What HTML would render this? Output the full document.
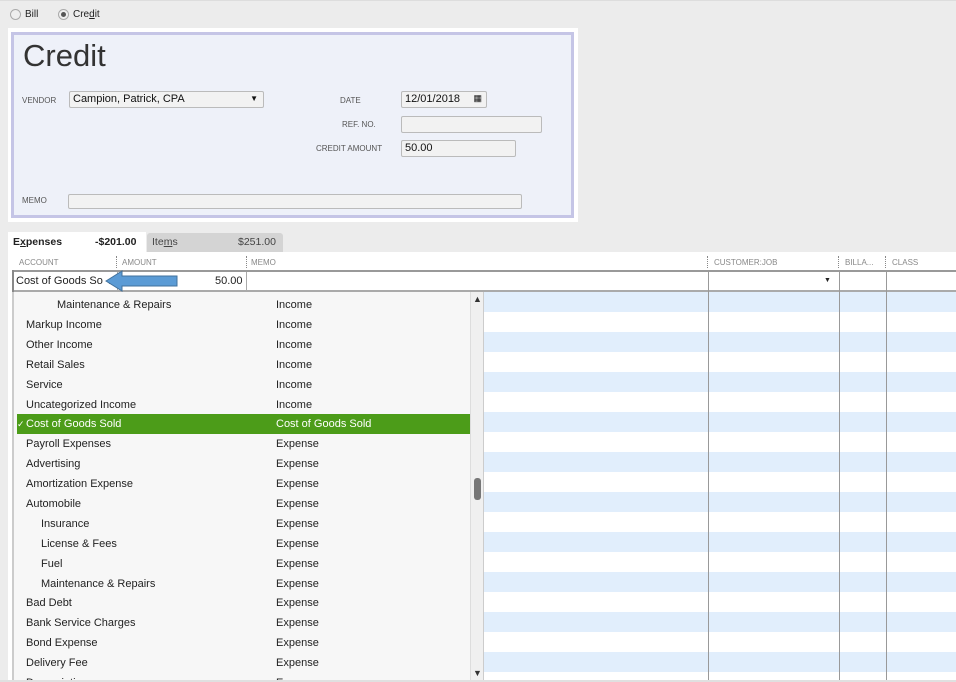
<!DOCTYPE html>
<html style="width:956px;height:682px;overflow:hidden"><head><style>
*{margin:0;padding:0;box-sizing:border-box}
body{width:956px;height:682px;background:#ececec;font-family:"Liberation Sans",Arial,sans-serif;position:relative;overflow:hidden;color:#222}
.a{position:absolute}
.lbl{font-size:8px;color:#555}
.fld{position:absolute;background:#f2f2f2;border:1px solid #bbb;border-radius:2px;font-size:12px;padding:2px 3px;color:#111}
.row{position:absolute;left:0;width:453px;height:20px;font-size:11px;line-height:21px;color:#222}
.row span{position:absolute}
</style></head><body>
<div class="a" style="left:0;top:0;width:956px;height:1px;background:#ddd"></div>
<div class="a" style="left:10px;top:9px;width:11px;height:11px;border-radius:50%;border:1px solid #aaa;background:#eee"></div>
<div class="a" style="left:25px;top:9px;font-size:10px">Bill</div>
<div class="a" style="left:58px;top:9px;width:11px;height:11px;border-radius:50%;border:1px solid #aaa;background:#eee"></div>
<div class="a" style="left:61px;top:12px;width:5px;height:5px;border-radius:50%;background:#555"></div>
<div class="a" style="left:73px;top:9px;font-size:10px">Cre<u>d</u>it</div>

<div class="a" style="left:8px;top:28px;width:570px;height:194px;background:#fff"></div>
<div class="a" style="left:11px;top:32px;width:563px;height:186px;background:#eef1f9;border:3px solid #c5c5e6"></div>
<div class="a" style="left:23px;top:38px;font-size:31px;color:#333">Credit</div>
<div class="a lbl" style="left:22px;top:96px">VENDOR</div>
<div class="fld" style="left:69px;top:91px;width:195px;height:17px;font-size:11px;padding:1px 3px">Campion, Patrick, CPA<span style="position:absolute;right:5px;top:2px;font-size:8px">▼</span></div>
<div class="a lbl" style="left:340px;top:96px">DATE</div>
<div class="fld" style="left:401px;top:91px;width:86px;height:17px;font-size:11px;padding:1px 3px">12/01/2018<span style="position:absolute;right:4px;top:1px;font-size:9px">▦</span></div>
<div class="a lbl" style="left:342px;top:120px">REF. NO.</div>
<div class="fld" style="left:401px;top:116px;width:141px;height:17px"></div>
<div class="a lbl" style="left:316px;top:144px">CREDIT AMOUNT</div>
<div class="fld" style="left:401px;top:140px;width:115px;height:17px;font-size:11px;padding:1px 3px">50.00</div>
<div class="a lbl" style="left:22px;top:196px">MEMO</div>
<div class="fld" style="left:68px;top:194px;width:454px;height:15px"></div>

<div class="a" style="left:8px;top:232px;width:138px;height:20px;background:#fff"></div>
<div class="a" style="left:13px;top:236px;font-size:10.5px;font-weight:bold">E<u>x</u>penses</div>
<div class="a" style="left:95px;top:236px;font-size:10.5px;font-weight:bold">-$201.00</div>
<div class="a" style="left:147px;top:233px;width:136px;height:19px;background:#d4d4d4;border-radius:3px 3px 0 0"></div>
<div class="a" style="left:152px;top:236px;font-size:10.5px;color:#444">Ite<u>m</u>s</div>
<div class="a" style="left:238px;top:236px;font-size:10.5px;color:#444">$251.00</div>

<div class="a" style="left:8px;top:252px;width:948px;height:430px;background:#fff"></div>
<div class="a" style="left:19px;top:258px;font-size:8px;color:#888">ACCOUNT</div>
<div class="a" style="left:122px;top:258px;font-size:8px;color:#888">AMOUNT</div>
<div class="a" style="left:251px;top:258px;font-size:8px;color:#888">MEMO</div>
<div class="a" style="left:714px;top:258px;font-size:8px;color:#888">CUSTOMER:JOB</div>
<div class="a" style="left:845px;top:258px;font-size:8px;color:#888">BILLA...</div>
<div class="a" style="left:892px;top:258px;font-size:8px;color:#888">CLASS</div>
<div class="a" style="left:116px;top:256px;height:12px;border-left:1px dotted #888"></div>
<div class="a" style="left:246px;top:256px;height:12px;border-left:1px dotted #888"></div>
<div class="a" style="left:707px;top:256px;height:12px;border-left:1px dotted #888"></div>
<div class="a" style="left:838px;top:256px;height:12px;border-left:1px dotted #888"></div>
<div class="a" style="left:885px;top:256px;height:12px;border-left:1px dotted #888"></div>

<div class="a" style="left:12px;top:270px;width:944px;height:2px;background:#999"></div>
<div class="a" style="left:12px;top:290px;width:944px;height:2px;background:#aaa"></div>
<div class="a" style="left:12px;top:270px;width:2px;height:22px;background:#888"></div>
<div class="a" style="left:16px;top:275px;font-size:11px">Cost of Goods So <span style="font-size:7px">▼</span></div>
<div class="a" style="left:117px;top:272px;width:1px;height:18px;background:#aaa"></div>
<div class="a" style="left:246px;top:272px;width:1px;height:18px;background:#aaa"></div>
<div class="a" style="left:215px;top:275px;font-size:11px">50.00</div>
<svg class="a" style="left:104px;top:270px" width="76" height="22"><polygon points="2,11 18,1 18,6 73,6 73,16 18,16 18,21" fill="#5b9bd5" stroke="#41719c" stroke-width="1"/></svg>
<div class="a" style="left:824px;top:277px;font-size:7px">▼</div>

<div class="a" style="left:484px;top:292px;width:472px;height:390px;background:repeating-linear-gradient(#e1eefc 0 20px,#fff 20px 40px)"></div>
<div class="a" style="left:708px;top:272px;width:1px;height:410px;background:#999"></div>
<div class="a" style="left:839px;top:272px;width:1px;height:410px;background:#999"></div>
<div class="a" style="left:886px;top:272px;width:1px;height:410px;background:#999"></div>

<div class="a" style="left:12px;top:292px;width:472px;height:390px;background:#f7f7f7;border-left:2px solid #ccc;border-right:1px solid #ccc;overflow:hidden">
<div class="row" style="top:3px"><span style="left:43px">Maintenance &amp; Repairs</span><span style="left:262px">Income</span></div>
<div class="row" style="top:23px"><span style="left:12px">Markup Income</span><span style="left:262px">Income</span></div>
<div class="row" style="top:43px"><span style="left:12px">Other Income</span><span style="left:262px">Income</span></div>
<div class="row" style="top:63px"><span style="left:12px">Retail Sales</span><span style="left:262px">Income</span></div>
<div class="row" style="top:83px"><span style="left:12px">Service</span><span style="left:262px">Income</span></div>
<div class="row" style="top:103px"><span style="left:12px">Uncategorized Income</span><span style="left:262px">Income</span></div>
<div class="row" style="top:122px;left:3px;width:454px;background:#4c9c19;color:#fff"><span style="left:0;font-size:9px">✓</span><span style="left:9px">Cost of Goods Sold</span><span style="left:259px">Cost of Goods Sold</span></div>
<div class="row" style="top:142px"><span style="left:12px">Payroll Expenses</span><span style="left:262px">Expense</span></div>
<div class="row" style="top:162px"><span style="left:12px">Advertising</span><span style="left:262px">Expense</span></div>
<div class="row" style="top:182px"><span style="left:12px">Amortization Expense</span><span style="left:262px">Expense</span></div>
<div class="row" style="top:202px"><span style="left:12px">Automobile</span><span style="left:262px">Expense</span></div>
<div class="row" style="top:222px"><span style="left:27px">Insurance</span><span style="left:262px">Expense</span></div>
<div class="row" style="top:242px"><span style="left:27px">License &amp; Fees</span><span style="left:262px">Expense</span></div>
<div class="row" style="top:262px"><span style="left:27px">Fuel</span><span style="left:262px">Expense</span></div>
<div class="row" style="top:282px"><span style="left:27px">Maintenance &amp; Repairs</span><span style="left:262px">Expense</span></div>
<div class="row" style="top:301px"><span style="left:12px">Bad Debt</span><span style="left:262px">Expense</span></div>
<div class="row" style="top:321px"><span style="left:12px">Bank Service Charges</span><span style="left:262px">Expense</span></div>
<div class="row" style="top:341px"><span style="left:12px">Bond Expense</span><span style="left:262px">Expense</span></div>
<div class="row" style="top:361px"><span style="left:12px">Delivery Fee</span><span style="left:262px">Expense</span></div>
<div class="row" style="top:381px"><span style="left:12px">Depreciation</span><span style="left:262px">Expense</span></div>
<div class="a" style="left:456px;top:0;width:14px;height:390px;background:#f0f0f0;border-left:1px solid #ddd"></div>
<div class="a" style="left:459px;top:2px;font-size:9px;color:#333">▲</div>
<div class="a" style="left:460px;top:186px;width:7px;height:22px;background:#777;border-radius:3px"></div>
<div class="a" style="left:459px;top:376px;font-size:9px;color:#333">▼</div>
</div>
<div class="a" style="left:0;top:680px;width:956px;height:2px;background:#e0e0e0"></div>
</body></html>
